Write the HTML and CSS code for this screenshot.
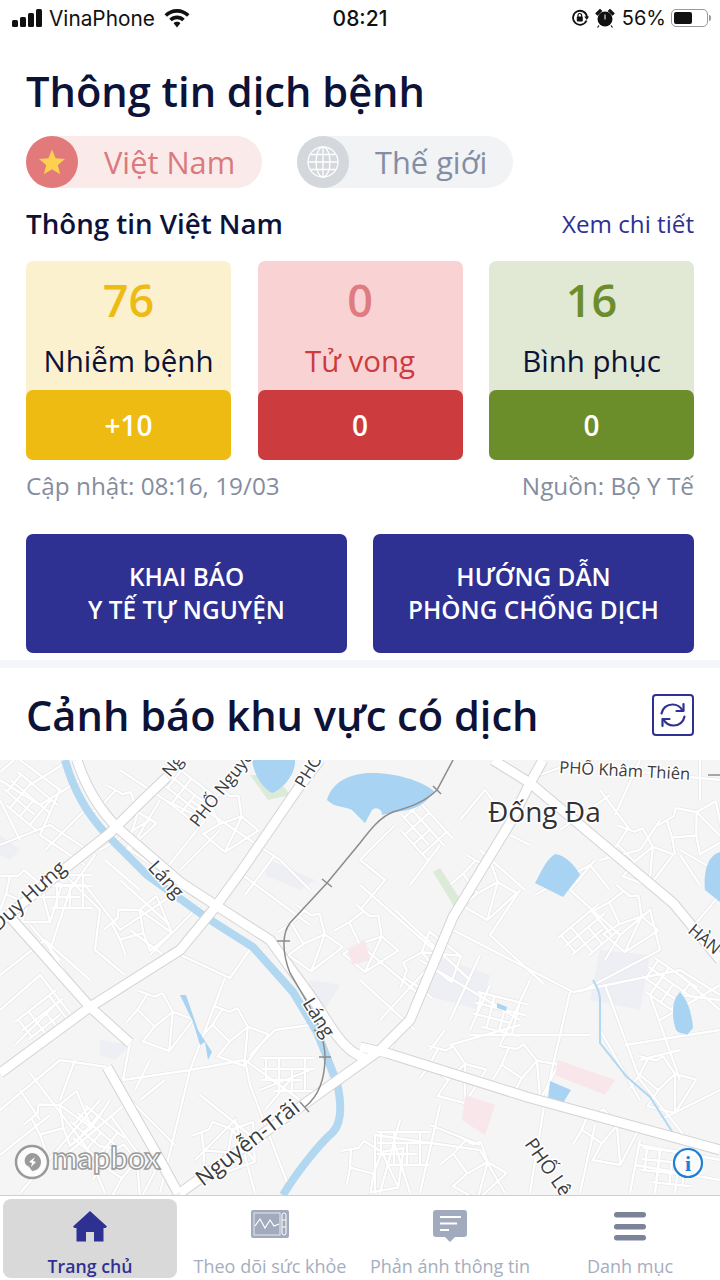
FILE: index.html

```html
<!DOCTYPE html>
<html lang="vi">
<head>
  <meta charset="UTF-8">
  <meta name="viewport" content="width=device-width, initial-scale=1.0">
  <title>Thông tin dịch bệnh</title>
  <link rel="stylesheet" href="styles.css">
</head>
<body>

  <div class="status">
    <div class="status-left">
      <svg class="signal" width="31" height="18" viewBox="0 0 31 18"><rect x="0" y="11" width="6" height="7" rx="1.5"/><rect x="8" y="8" width="6" height="10" rx="1.5"/><rect x="16" y="4" width="6" height="14" rx="1.5"/><rect x="24" y="0" width="6" height="18" rx="1.5"/></svg>
      <span>VinaPhone</span>
      <svg class="wifi" width="26" height="19" viewBox="0 0 26 19"><path d="M13 0C8 0 4 2 0.5 5.200L3 7.800C5.800 5.200 9 3.800 13 3.800S20.200 5.200 23 7.800L25.500 5.200C22 2 18 0 13 0Z"/><path d="M13 6.500C10 6.500 7.500 7.600 5.300 9.700L7.800 12.200C9.300 10.900 11 10.200 13 10.200S16.700 10.900 18.200 12.200L20.700 9.700C18.500 7.600 16 6.500 13 6.500Z"/><path d="M13 12.800C11.600 12.800 10.500 13.300 9.600 14.200L13 18.500L16.400 14.200C15.500 13.300 14.400 12.800 13 12.800Z"/></svg>
    </div>
    <div class="status-time">08:21</div>
    <div class="status-right">
      <svg width="18" height="18" viewBox="0 0 18 18" class="lock"><path d="M15.500 11.500A7 7 0 1 1 16 8" fill="none" stroke="#111" stroke-width="1.800"/><path d="M13.200 7.500H18L15.800 11Z" fill="#111"/><rect x="5.800" y="7.500" width="6" height="5" rx="1" fill="#111"/><path d="M7 8V6.300a1.800 1.800 0 0 1 3.600 0V8" fill="none" stroke="#111" stroke-width="1.200"/></svg>
      <svg width="20" height="20" viewBox="0 0 20 20" class="alarm"><circle cx="10" cy="11" r="7.500" fill="#111"/><path d="M1 5.500L5 1.500L6.500 3L2.500 7Z M19 5.500L15 1.500L13.500 3L17.500 7Z M4 17.500L2.500 19.500 M16 17.500L17.500 19.500" fill="#111" stroke="#111" stroke-width="1.200"/><path d="M10 6.500V11.500" stroke="#fff" stroke-width="1"/></svg>
      <span class="pct">56%</span>
      <div class="battery"><div class="battery-level"></div></div>
      <div class="battery-tip"></div>
    </div>
  </div>

  <section class="info">
    <h1 class="title">Thông tin dịch bệnh</h1>

    <div class="tabs">
      <div class="tab tab-vn">
        <span class="tab-icon">
          <svg width="28" height="28" viewBox="0 0 28 28"><path d="M14 1.500L17.600 10.300L27 11L19.800 17L22.100 26.200L14 21.200L5.900 26.200L8.200 17L1 11L10.400 10.300Z" fill="#fdd14f"/></svg>
        </span>
        <span class="tab-text">Việt Nam</span>
      </div>
      <div class="tab tab-world">
        <span class="tab-icon">
          <svg width="34" height="34" viewBox="0 0 34 34" fill="none" stroke="#fff" stroke-width="1.300"><circle cx="17" cy="17" r="15"/><ellipse cx="17" cy="17" rx="7" ry="15"/><path d="M17 2V32M2 17H32M4.500 9.500H29.500M4.500 24.500H29.500"/></svg>
        </span>
        <span class="tab-text">Thế giới</span>
      </div>
    </div>

    <div class="sub-head">
      <h2>Thông tin Việt Nam</h2>
      <a class="detail">Xem chi tiết</a>
    </div>

    <div class="cards">
      <div class="card card-yellow">
        <div class="card-top">
          <div class="card-num">76</div>
          <div class="card-label">Nhiễm bệnh</div>
        </div>
        <div class="card-delta">+10</div>
      </div>
      <div class="card card-red">
        <div class="card-top">
          <div class="card-num">0</div>
          <div class="card-label">Tử vong</div>
        </div>
        <div class="card-delta">0</div>
      </div>
      <div class="card card-green">
        <div class="card-top">
          <div class="card-num">16</div>
          <div class="card-label">Bình phục</div>
        </div>
        <div class="card-delta">0</div>
      </div>
    </div>

    <div class="meta">
      <span>Cập nhật: 08:16, 19/03</span>
      <span>Nguồn: Bộ Y Tế</span>
    </div>

    <div class="actions">
      <button class="action">KHAI BÁO<br>Y TẾ TỰ NGUYỆN</button>
      <button class="action">HƯỚNG DẪN<br>PHÒNG CHỐNG DỊCH</button>
    </div>
  </section>

  <div class="divider"></div>

  <div class="warn-head">
    <h1 class="title">Cảnh báo khu vực có dịch</h1>
    <button class="refresh">
      <svg width="30" height="30" viewBox="0 0 30 30" fill="none" stroke="#2f3192" stroke-width="2.200" stroke-linecap="round" stroke-linejoin="round"><path d="M3.500 13.500C4.500 8 9 4.500 14.500 4.500C19 4.500 22.500 6.800 24.500 10.500"/><path d="M25.500 4V11H18.500"/><path d="M26.500 16.500C25.500 22 21 25.500 15.500 25.500C11 25.500 7.500 23.200 5.500 19.500"/><path d="M4.500 26V19H11.500"/></svg>
    </button>
  </div>

  <div class="map">
    <svg class="map-svg" width="720" height="435" viewBox="0 0 720 435">
      <defs>
        <path id="alleys" d="M0 0H52M0 11H52M0 22H40M12 33H52M4 0V22M17 0V33M30 11V33M43 0V33"/>
        <path id="lanes" d="M0 6H18L24 0M24 0L40 14H62M10 6L6 24L28 34M28 34L40 14M28 34L22 52H50L62 14M40 14L50 52M6 24L0 40"/>
        <g id="minor" fill="none">
          <use href="#alleys" transform="translate(18 12) rotate(40)"/>
          <use href="#alleys" transform="translate(40 115)"/>
          <use href="#alleys" transform="translate(15 262) rotate(-38)"/>
          <use href="#alleys" transform="translate(178 8) rotate(38)"/>
          <use href="#alleys" transform="translate(418 40) rotate(48)"/>
          <use href="#alleys" transform="translate(262 298)"/>
          <use href="#alleys" transform="translate(377 372)"/>
          <use href="#alleys" transform="translate(643 388) rotate(6)"/>
          <use href="#alleys" transform="translate(558 178) rotate(-40)"/>
          <use href="#alleys" transform="translate(478 232) rotate(14)"/>
          <use href="#alleys" transform="translate(655 198) rotate(35)"/>
          <use href="#alleys" transform="translate(85 345) rotate(40)"/>
          <use href="#lanes" transform="translate(110 20) rotate(30)"/>
          <use href="#lanes" transform="translate(0 110)"/>
          <use href="#lanes" transform="translate(100 165) rotate(-40)"/>
          <use href="#lanes" transform="translate(140 225) rotate(20)"/>
          <use href="#lanes" transform="translate(20 360) rotate(-40)"/>
          <use href="#lanes" transform="translate(100 380) rotate(10)"/>
          <use href="#lanes" transform="translate(220 20) rotate(40)"/>
          <use href="#lanes" transform="translate(300 140) rotate(35)"/>
          <use href="#lanes" transform="translate(215 240) rotate(20)"/>
          <use href="#lanes" transform="translate(190 370) rotate(-20)"/>
          <use href="#lanes" transform="translate(360 140) rotate(40)"/>
          <use href="#lanes" transform="translate(470 90) rotate(30)"/>
          <use href="#lanes" transform="translate(620 60) rotate(20)"/>
          <use href="#lanes" transform="translate(655 60) rotate(-30)"/>
          <use href="#lanes" transform="translate(620 120) rotate(40)"/>
          <use href="#lanes" transform="translate(430 280) rotate(15)"/>
          <use href="#lanes" transform="translate(500 280) rotate(10)"/>
          <use href="#lanes" transform="translate(640 290) rotate(15)"/>
          <use href="#lanes" transform="translate(580 345) rotate(10)"/>
          <use href="#lanes" transform="translate(340 385) rotate(-10)"/>
          <use href="#lanes" transform="translate(460 370) rotate(30)"/>
          <use href="#lanes" transform="translate(395 225) rotate(-70)"/>
          <path d="M0 20L40 45L80 20M20 0L60 30L40 75L85 105M0 85L50 65L95 95L70 130M14 0L0 12"/>
          <path d="M60 110L100 150L95 190L125 215M25 125L85 125L120 170L180 130M70 130L50 190L90 247"/>
          <path d="M0 215L45 180L90 220M0 250L40 215L75 260M15 285L60 240M30 165L60 200"/>
          <path d="M120 10L165 40L205 60M160 40L130 90L175 120M205 60L165 110M100 90L150 60"/>
          <path d="M190 40L280 100L310 130M240 113L310 165M180 110L220 70M275 95L245 135"/>
          <path d="M170 190L230 218L253 185M200 145L150 195M130 170L170 200M120 120L170 165"/>
          <path d="M225 218L190 310L160 433M130 283L123 320L190 310L245 300L250 325L290 430"/>
          <path d="M250 295L275 270L310 265L325 295L335 330M245 300L300 340M260 330L310 310M265 350L290 320"/>
          <path d="M0 350L60 300L107 307M20 433L100 340M30 313L85 385L105 433M0 395L50 355M60 400L130 340L175 385M110 355L150 410"/>
          <path d="M200 335L250 375M195 400L235 360L255 433M205 410L240 395"/>
          <path d="M395 65L360 100L385 120L360 150M440 85L410 125"/>
          <path d="M360 125L440 195L380 260M395 150L470 220M360 185L420 235L390 290M360 220L415 270"/>
          <path d="M460 60L485 30L510 63M510 75L530 85M480 90L525 130M520 130L490 175L545 225"/>
          <path d="M595 100L570 130L620 175L605 200M620 175L650 150L660 190L580 232M535 135L590 105L610 130"/>
          <path d="M453 170L573 232M573 232L680 210L720 235M570 232L545 340L530 433M420 200L470 230L520 260"/>
          <path d="M480 195L450 260M530 220L500 285M490 225L470 270M470 275L590 275M450 285L520 265M445 270L430 290"/>
          <path d="M605 225L640 320L680 370L700 400M650 235L680 320M625 285L720 270M640 300L680 290"/>
          <path d="M600 270L640 340M660 260L720 225M680 215L720 250M680 235L720 240M690 170L720 135"/>
          <path d="M660 60L640 90L600 100M600 30L630 70M560 70L610 35M680 90L715 110M700 125L680 95"/>
          <path d="M400 360L380 433M440 345L420 433M375 375L480 390L505 433M375 375L375 433M395 385L410 433M430 365L480 385"/>
          <path d="M595 365L580 433M640 380L630 433M640 385L720 400M660 390L655 433M680 395L675 433M635 405L720 420M660 360L720 330"/>
          <path d="M540 15L580 0M700 0L700 40M620 10L720 20M640 0L615 55"/>
          <path d="M0 40L20 80M30 25L70 0M85 50L45 90M105 100L140 130"/>
          <path d="M20 330L40 360M75 300L60 340M110 340L90 370M150 300L135 330M140 340L165 320"/>
        </g>
        <g id="major" fill="none">
          <path d="M77 0C85 25 100 52 120 70L180 122L220 148L270 180L310 235L333 270C345 288 355 295 365 298"/>
          <path d="M167 17L143 40L110 73L67 107L0 162"/>
          <path d="M0 313L90 247L180 190L213 150L240 113L297 30L320 0"/>
          <path d="M10 157L90 247L130 283"/>
          <path d="M107 307L160 400L178 433"/>
          <path d="M180 433L300 347L380 290L410 260L453 157L510 63L530 23L543 0"/>
          <path d="M360 287L387 293L527 337L720 390"/>
          <path d="M530 23L673 143L720 200"/>
          <path d="M493 0L530 23"/>
        </g>
      </defs>

      <rect width="720" height="435" fill="#f5f5f6"/>

      <!-- land use -->
      <path class="zone" d="M430 195L490 215L480 250L425 235Z"/>
      <path class="zone" d="M270 100L315 120L300 130L265 115Z"/>
      <path class="zone" d="M600 190L650 195L640 250L590 240Z"/>
      <path class="zone" d="M310 220L340 225L325 250L305 240Z"/>
      <path class="zone" d="M0 75L20 90L10 100L0 95Z"/>
      <path class="zone" d="M100 280L130 285L115 300L100 295Z"/>

      <use href="#minor" class="road-minor-case"/>
      <use href="#minor" class="road-minor"/>

      <path class="zone-pink" d="M558 300L615 320L605 335L555 315Z"/>
      <path class="zone-pink" d="M465 335L495 345L485 375L462 360Z"/>
      <path class="zone-pink" d="M348 190L365 180L370 200L352 205Z"/>
      <path class="zone-green" d="M250 15L268 40L290 35L275 15Z"/>
      <path class="zone-green" d="M433 112L440 108L462 142L455 148Z"/>

      <!-- water -->
      <path class="lake" d="M252 0H295C296 12 285 28 272 33C262 28 254 15 252 0Z"/>
      <path class="lake" d="M327 40C332 22 350 13 372 13C395 13 420 20 434 31C425 45 415 50 396 52L382 55A6 6 0 0 0 372 50L365 63L352 50C345 46 335 48 327 40Z"/>
      <path class="lake" d="M555 94C545 100 540 115 535 123L563 137L580 115C575 105 565 95 555 94Z"/>
      <path class="lake" d="M720 92C708 95 703 112 705 130L720 142Z"/>
      <path class="lake" d="M680 232C672 240 671 255 676 270C680 275 685 273 687 275L693 268C692 255 688 240 680 232Z"/>
      <path class="lake" d="M550 321L571 330L563 343L548 341Z"/>
      <path class="lake" d="M180 235L193 262L200 285L205 282L208 300L212 292L198 270L186 235Z"/>
      <path class="lake" d="M497 243L507 247L506 251L497 248Z"/>
      <path class="canal-thin" d="M593 220C598 228 600 235 600 240L600 283L627 317L650 337L673 373"/>
      <path class="canal" d="M65 0C72 25 85 52 107 75L147 115L207 158L253 187L293 232L317 272L337 323C342 345 342 362 333 372C318 385 295 415 283 435"/>

      <use href="#major" class="road-major-case"/>
      <use href="#major" class="road-major"/>

      <!-- rail -->
      <path class="rail" d="M453 0L437 30C425 42 410 47 393 52C380 57 370 70 360 83L327 123L290 163C283 172 281 190 290 213L310 247C320 265 325 285 325 297C325 315 320 335 305 347"/>
      <path class="rail-tick" d="M433 26L441 34M322 119L332 127M277 181H290M314 270L323 274M319 297H331M300 342L309 352M708 15H720"/>

      <!-- labels -->
      <text class="label label-small" transform="translate(559 13) rotate(3)">PHỐ Khâm Thiên</text>
      <text class="label-big" x="488" y="62">Đống Đa</text>
      <text class="label" transform="translate(198 68) rotate(-52)">PHỐ Nguyễn</text>
      <text class="label" transform="translate(304 29) rotate(-58)">PHỐ</text>
      <text class="label" transform="translate(170 18) rotate(-50)">Ng</text>
      <text class="label label-road" transform="translate(147 108) rotate(48)">Láng</text>
      <text class="label label-road" transform="translate(302 243) rotate(58)">Láng</text>
      <text class="label-mid" transform="translate(-2 172) rotate(-42)">Duy Hưng</text>
      <text class="label-mid label-long" transform="translate(203 427) rotate(-38)">Nguyễn-Trãi</text>
      <text class="label" transform="translate(687 172) rotate(40)">HÀN</text>
      <text class="label label-road" transform="translate(524 384) rotate(55)">PHỐ Lê</text>

      <!-- attribution -->
      <circle cx="32" cy="402" r="16" fill="#fff" fill-opacity="0.7" stroke="#999" stroke-width="2.500"/>
      <path d="M32 393C37 393 41 397 41 402C41 407 37 411 32 411C30 408 29 406 26 405C22 398 28 393 32 393Z" fill="#9a9a9a"/>
      <path d="M35 397L33 401L36 402L31 407L32 403L29 402Z" fill="#fff"/>
      <text class="mapbox" x="52" y="409">mapbox</text>
      <circle cx="688" cy="403" r="14" fill="#fff" fill-opacity="0.6" stroke="#1c7fd6" stroke-width="2.200"/>
      <text class="info-i" x="688" y="411">i</text>
    </svg>
  </div>

  <nav class="nav">
    <div class="nav-item active">
      <svg width="36" height="32" viewBox="0 0 36 32"><path d="M18 1L35 16.500L33.500 18H31.500V31.500H22V22H14V31.500H4.500V18H2.500L1 16.500Z" fill="#2f3192"/></svg>
      <span>Trang chủ</span>
    </div>
    <div class="nav-item">
      <svg width="38" height="32" viewBox="0 0 38 32"><rect x="0" y="0" width="38" height="28" rx="2" fill="#a1abbd"/><rect x="3" y="3" width="26" height="22" fill="#a1abbd" stroke="#e6e9ee" stroke-width="1"/><path d="M4 16L9 9L14 18L19 10L23 16L28 14" fill="none" stroke="#fff" stroke-width="1.200"/><rect x="31" y="3" width="4" height="22" rx="2" fill="none" stroke="#fff" stroke-width="1"/><path d="M31 10H35M31 17H35" stroke="#fff"/></svg>
      <span>Theo dõi sức khỏe</span>
    </div>
    <div class="nav-item">
      <svg width="34" height="32" viewBox="0 0 34 32"><path d="M3 0H31Q34 0 34 3V24Q34 27 31 27H22L17 32L12 27H3Q0 27 0 24V3Q0 0 3 0Z" fill="#a1abbd"/><path d="M7 7H28M7 13.500H24M7 20H16" stroke="#fff" stroke-width="1.800"/></svg>
      <span>Phản ánh thông tin</span>
    </div>
    <div class="nav-item">
      <svg width="32" height="30" viewBox="0 0 32 30"><rect x="0" y="1" width="32" height="5.500" rx="2.700" fill="#7b8398"/><rect x="0" y="13" width="32" height="5.500" rx="2.700" fill="#7b8398"/><rect x="0" y="24" width="32" height="5.500" rx="2.700" fill="#7b8398"/></svg>
      <span>Danh mục</span>
    </div>
  </nav>

</body>
</html>
```

FILE: styles.css

```css
body {
  margin: 0;
  width: 720px;
  height: 1280px;
  overflow: hidden;
  display: flex;
  flex-direction: column;
  background-color: #ffffff;
  font-family: 'Open Sans', 'Noto Sans', sans-serif;
  color: #0c1238;
}
h1, h2 {
  margin: 0;
}

/* status bar */
.status {
  height: 36px;
  flex: none;
  display: grid;
  grid-template-columns: 1fr auto 1fr;
  align-items: center;
  padding: 0 9px;
  font-family: 'Inter', 'Liberation Sans', sans-serif;
  font-size: 20px;
  color: #111;
}
.status-left {
  display: flex;
  align-items: center;
  gap: 6px;
  font-size: 20.800px;
}
.signal {
  fill: #111;
  margin-left: 3px;
}
.wifi {
  fill: #111;
  margin-left: 3px;
}
.status-time {
  font-weight: 500;
  font-size: 21px;
}
.status-right {
  display: flex;
  align-items: center;
  justify-content: flex-end;
  gap: 6px;
}
.pct {
  margin-left: 1px;
}
.battery {
  width: 37px;
  height: 18px;
  box-sizing: border-box;
  border: 1.5px solid #999;
  border-radius: 5px;
  padding: 2px;
  margin-left: -1px;
}
.battery-level {
  width: 58%;
  height: 100%;
  background-color: #111;
  border-radius: 2px;
}
.battery-tip {
  width: 2px;
  height: 6px;
  background-color: #999;
  margin-left: -5px;
  border-radius: 0 2px 2px 0;
}

/* top section */
.info {
  padding: 27px 26px 0;
  flex: none;
}
.title {
  font-size: 41.600px;
  line-height: 56px;
  font-weight: 600;
  color: #0c1238;
}
.tabs {
  display: flex;
  gap: 35px;
  margin-top: 17px;
}
.tab {
  height: 52px;
  border-radius: 26px;
  display: flex;
  align-items: center;
}
.tab-icon {
  width: 52px;
  height: 52px;
  border-radius: 50%;
  display: flex;
  align-items: center;
  justify-content: center;
}
.tab-text {
  font-size: 30.800px;
  font-weight: 500;
}
.tab-vn {
  width: 236px;
  background-color: #faeaea;
  color: #db7a7c;
}
.tab-vn .tab-icon {
  background-color: #e27a7c;
}
.tab-vn .tab-text {
  margin-left: 26px;
}
.tab-world {
  width: 216px;
  background-color: #f1f3f5;
  color: #858da3;
}
.tab-world .tab-icon {
  background-color: #d4d7db;
}
.tab-world .tab-text {
  margin-left: 26px;
}
.sub-head {
  display: flex;
  justify-content: space-between;
  align-items: center;
  margin-top: 16px;
  height: 38px;
}
.sub-head h2 {
  font-size: 27.700px;
  font-weight: 600;
  color: #0c1238;
}
.detail {
  font-size: 24.200px;
  color: #2f3192;
}
.cards {
  display: grid;
  grid-template-columns: repeat(3, 205px);
  justify-content: space-between;
  margin-top: 19px;
}
.card {
  height: 199px;
  border-radius: 7px;
  display: flex;
  flex-direction: column;
  text-align: center;
}
.card-top {
  flex: 1;
}
.card-num {
  font-size: 45px;
  line-height: 60px;
  font-weight: 600;
  margin-top: 9px;
}
.card-label {
  font-size: 29.500px;
  line-height: 40px;
  margin-top: 11px;
}
.card-delta {
  height: 70px;
  line-height: 70px;
  border-radius: 7px;
  font-size: 28px;
  font-weight: 600;
  color: #ffffff;
}
.card-yellow {
  background-color: #fbf1cf;
}
.card-yellow .card-num {
  color: #eebb12;
}
.card-yellow .card-delta {
  background-color: #eebb12;
}
.card-red {
  background-color: #f9d3d4;
}
.card-red .card-num {
  color: #df7c80;
}
.card-red .card-label {
  color: #cc3c3f;
}
.card-red .card-delta {
  background-color: #cc3c3f;
}
.card-green {
  background-color: #e1e8d4;
}
.card-green .card-num {
  color: #6c8e2a;
}
.card-green .card-delta {
  background-color: #6c8e2a;
}
.meta {
  display: flex;
  justify-content: space-between;
  margin-top: 8px;
  font-size: 24.300px;
  line-height: 36px;
  color: #858d9e;
}
.actions {
  display: flex;
  justify-content: space-between;
  margin-top: 30px;
}
.action {
  width: 321px;
  height: 119px;
  border: none;
  border-radius: 7px;
  background-color: #2f3192;
  color: #ffffff;
  font-family: inherit;
  font-size: 24.400px;
  line-height: 33px;
  font-weight: 600;
  padding: 0 0 2px;
}
.divider {
  height: 8px;
  flex: none;
  margin-top: 7px;
  background-color: #f5f6f9;
}
.warn-head {
  flex: none;
  height: 92px;
  box-sizing: border-box;
  padding: 2px 26px 0;
  display: flex;
  justify-content: space-between;
  align-items: center;
}
.refresh {
  width: 42px;
  height: 42px;
  padding: 0;
  background: none;
  border: 2px solid #2f3192;
  border-radius: 4px;
  display: flex;
  align-items: center;
  justify-content: center;
}

/* map */
.map {
  flex: none;
  height: 435px;
  overflow: hidden;
}
.map-svg {
  display: block;
}
.zone {
  fill: #eeeef5;
}
.zone-pink {
  fill: #f8e6ea;
}
.zone-green {
  fill: #dcebd8;
}
.lake {
  fill: #a9d3f2;
}
.canal {
  fill: none;
  stroke: #b2d7f0;
  stroke-width: 8;
}
.canal-thin {
  fill: none;
  stroke: #b2d7f0;
  stroke-width: 2;
}
.road-minor-case {
  stroke: #e4e4e6;
  stroke-width: 3.600;
}
.road-minor {
  stroke: #ffffff;
  stroke-width: 2.400;
}
.road-major-case {
  stroke: #d4d4d6;
  stroke-width: 11;
}
.road-major {
  stroke: #ffffff;
  stroke-width: 9;
}
.rail {
  fill: none;
  stroke: #8c8c8c;
  stroke-width: 1.500;
}
.rail-tick {
  fill: none;
  stroke: #8c8c8c;
  stroke-width: 1.500;
}
.label, .label-mid, .label-big {
  fill: #3c3c3c;
  stroke: #ffffff;
  stroke-width: 3px;
  paint-order: stroke;
}
.label {
  font-size: 17px;
}
.label-small {
  font-size: 16.500px;
}
.label-road {
  font-size: 19px;
}
.label-mid {
  font-size: 20px;
}
.label-long {
  font-size: 22px;
}
.label-big {
  font-size: 28px;
  fill: #333;
}
.mapbox {
  font-family: 'Lato', sans-serif;
  font-weight: 700;
  font-size: 30.500px;
  fill: #ffffff;
  stroke: #9a9a9a;
  stroke-width: 1.500px;
}
.info-i {
  font-family: 'Liberation Serif', serif;
  font-weight: 700;
  font-size: 22px;
  fill: #1c7fd6;
  text-anchor: middle;
}

/* bottom nav */
.nav {
  flex: 1;
  display: grid;
  grid-template-columns: 180px 180px 180px 180px;
  border-top: 1px solid #cfcfcf;
}
.nav-item {
  display: flex;
  flex-direction: column;
  align-items: center;
  justify-content: flex-start;
  padding-top: 14px;
  font-size: 18px;
  font-weight: 500;
  color: #a6aebd;
  white-space: nowrap;
}
.nav-item svg {
  height: 32px;
  display: block;
}
.nav-item span {
  margin-top: 12px;
}
.nav-item.active {
  margin: 3px 3px 4px;
  padding-top: 11px;
  border-radius: 8px;
  background-color: #d9d9d9;
  color: #2f3192;
  font-weight: 600;
}
.nav-item.active span {
  font-size: 17.700px;
}
```
